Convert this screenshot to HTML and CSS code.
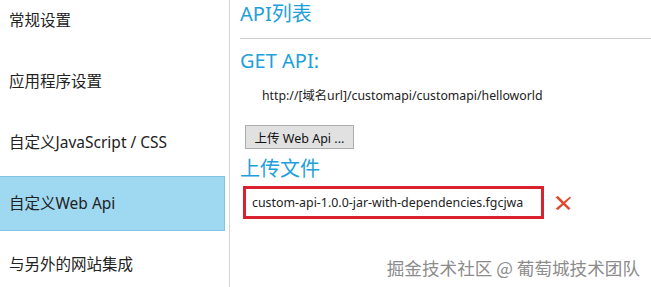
FILE: index.html
```html
<!DOCTYPE html>
<html lang="zh-CN">
<head>
    <meta charset="UTF-8">
    <meta name="viewport" content="width=device-width, initial-scale=1.0">
    <title>自定义Web Api</title>
    <link rel="stylesheet" href="styles.css">
</head>
<body>
    <div class="page">
        <ul class="sidebar">
            <li class="nav-item">常规设置</li>
            <li class="nav-item">应用程序设置</li>
            <li class="nav-item">自定义JavaScript / CSS</li>
            <li class="nav-item active">自定义Web Api</li>
            <li class="nav-item">与另外的网站集成</li>
        </ul>
        <div class="content">
            <div class="title-bar">
                <h2 class="heading">API列表</h2>
            </div>
            <h2 class="heading sub">GET API:</h2>
            <div class="api-url">http://[域名url]/customapi/customapi/helloworld</div>
            <button class="upload-btn" type="button">上传 Web Api ...</button>
            <h2 class="heading files">上传文件</h2>
            <div class="file-row">
                <div class="file-name">custom-api-1.0.0-jar-with-dependencies.fgcjwa</div>
                <svg class="remove" width="16" height="14" viewBox="0 0 16 14">
                    <path d="M0.5 1.2 L3 0 L15.5 12.6 L13.6 14 Z" fill="#e2472c"/>
                    <path d="M15 0.4 L16 1.8 L3 14 L0.6 12.8 Z" fill="#e2472c"/>
                </svg>
            </div>
        </div>
    </div>
    <div class="watermark">掘金技术社区 @ 葡萄城技术团队</div>
</body>
</html>
```

FILE: styles.css
```css
body {
    margin: 0;
    font-family: "Noto Sans", "Noto Sans CJK SC", sans-serif;
    color: #222;
    background: #fff;
    overflow: hidden;
}
.page {
    display: flex;
    height: 287px;
}
.sidebar {
    list-style: none;
    margin: -7px 0 0 0;
    padding: 0 4px 0 0;
    width: 225px;
    border-right: 1px solid #d4d4d4;
}
.nav-item {
    height: 55px;
    line-height: 55px;
    margin-bottom: 6px;
    padding-left: 9px;
    font-size: 15.5px;
    box-sizing: border-box;
    white-space: nowrap;
}
.nav-item.active {
    background-color: #9fd8f1;
    border: 1px solid #80c6e4;
    border-left: none;
    line-height: 53px;
}
.content {
    flex: 1;
    padding-left: 10px;
}
.title-bar {
    height: 38px;
    border-bottom: 1px solid #cfcfcf;
}
.heading {
    margin: 0;
    font-size: 20px;
    font-weight: normal;
    line-height: 28px;
    color: #1ea0da;
}
.heading.sub {
    margin-top: 8px;
}
.api-url {
    margin: 12px 0 0 22px;
    font-size: 12.3px;
    line-height: 18px;
}
.upload-btn {
    display: block;
    margin: 20px 0 0 5px;
    width: 109px;
    height: 24px;
    padding: 0;
    font-family: inherit;
    font-size: 12.5px;
    color: #111;
    background-color: #e1e1e1;
    border: 1px solid #adadad;
    border-radius: 0;
}
.heading.files {
    margin-top: 6px;
}
.file-row {
    display: flex;
    align-items: center;
    margin: 3px 0 0 3px;
}
.file-name {
    width: 301px;
    height: 33px;
    box-sizing: border-box;
    border: 3px solid #d9222e;
    padding-left: 6px;
    line-height: 27px;
    font-size: 12.4px;
    white-space: nowrap;
}
.remove {
    margin: 0 0 0 11px;
}
.watermark {
    position: absolute;
    right: 11px;
    top: 255px;
    font-size: 17.6px;
    color: #8c8c8c;
    text-shadow: 0 0 2px #fff, 1px 1px 1px #fff;
    font-family: "Noto Sans CJK SC", sans-serif;
}
```
